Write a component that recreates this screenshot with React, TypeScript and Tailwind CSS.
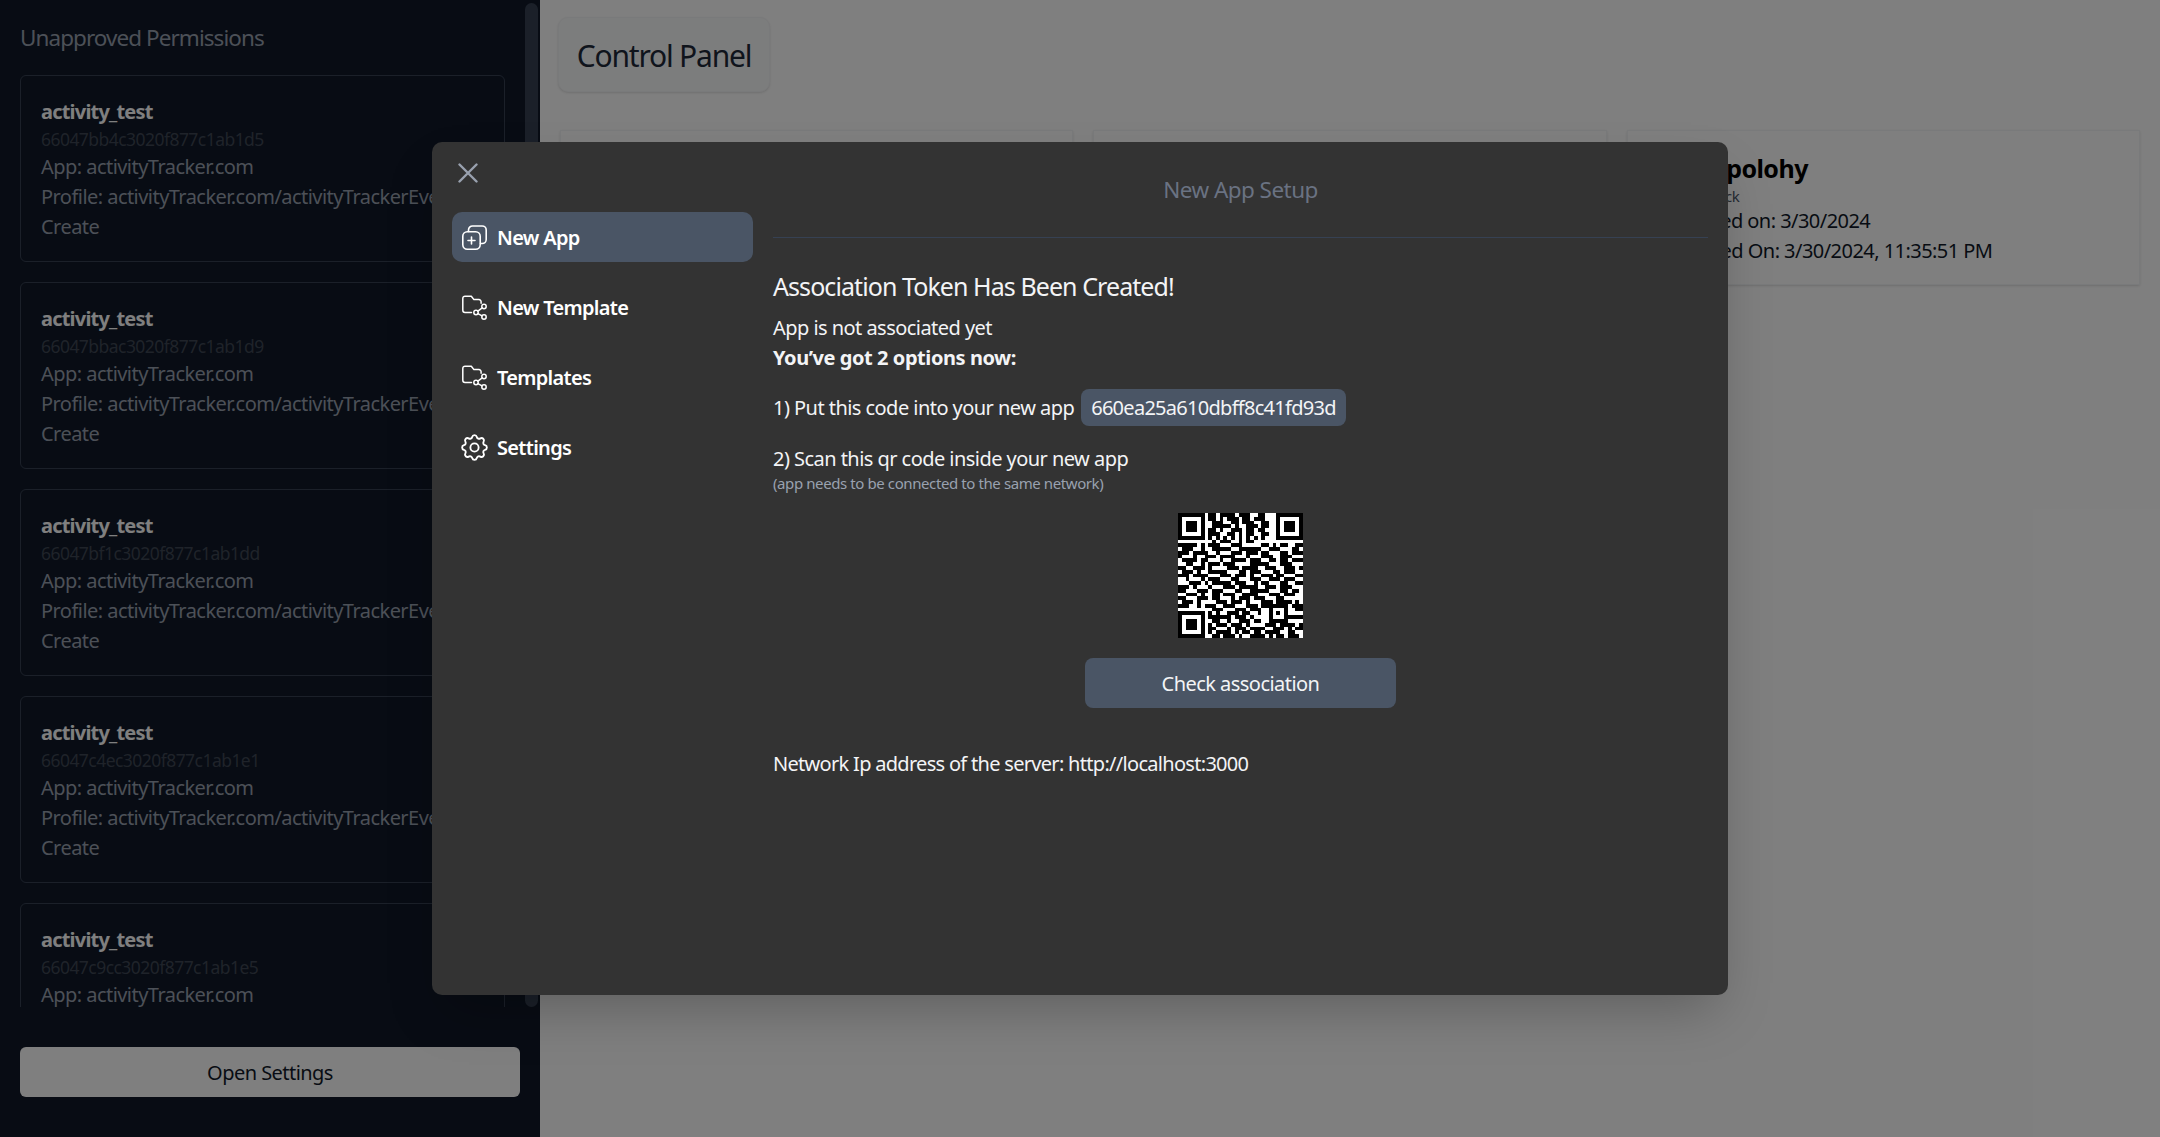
import React from 'react';
import { TbSettings } from 'react-icons/tb';

const permissionIds = [
  '66047bb4c3020f877c1ab1d5',
  '66047bbac3020f877c1ab1d9',
  '66047bf1c3020f877c1ab1dd',
  '66047c4ec3020f877c1ab1e1',
  '66047c9cc3020f877c1ab1e5',
];

const NewAppIcon = () => (
  <svg viewBox="0 0 25 25" className="w-[25px] h-[25px] shrink-0" fill="none" stroke="currentColor" strokeWidth="1.6" strokeLinecap="round" strokeLinejoin="round">
    <rect x="0.8" y="6.8" width="17.4" height="17.4" rx="4.5" />
    <path d="M9.5 12v7M6 15.5h7" />
    <path d="M6.5 6.5V5a4 4 0 0 1 4-4h9.7a4 4 0 0 1 4 4v9.5a4 4 0 0 1-4 4h-1.7" />
  </svg>
);

const FolderShareIcon = () => (
  <svg viewBox="0 0 25 25" className="w-[25px] h-[25px] shrink-0" fill="none" stroke="currentColor" strokeWidth="1.5" strokeLinecap="round" strokeLinejoin="round">
    <path d="M9.5 17.5H3a2.2 2.2 0 0 1-2.2-2.2V3.4A2.2 2.2 0 0 1 3 1.2h6.3l2.6 3.4h5a2.2 2.2 0 0 1 2.2 2.2v1.4" />
    <circle cx="14" cy="17.5" r="2.2" />
    <circle cx="22" cy="11.5" r="2.2" />
    <circle cx="22" cy="22" r="2.2" />
    <path d="M15.9 16.2l4.3-3.3M15.9 18.7l4.2 2.2" />
  </svg>
);

const SettingsIcon = () => <TbSettings className="w-[33px] h-[33px] -m-1 shrink-0" strokeWidth={1.35} />;

const navItems = [
  { label: 'New App', icon: NewAppIcon, active: true },
  { label: 'New Template', icon: FolderShareIcon, active: false },
  { label: 'Templates', icon: FolderShareIcon, active: false },
  { label: 'Settings', icon: SettingsIcon, active: false },
];

// 33 x 33 modules, grouped in 11s; finder and alignment patterns are stamped over it
const qrRows = [
  '........##. ####.###..# #..........',
  '........##. #.###.##.## #..........',
  '.........## #..##.###.. ##.........',
  '.........## ###.#..###. ##.........',
  '........##. #..###.##.# #..........',
  '........### ..##.#.##.. ##.........',
  '........#.# .#.#.#.#.#. #..........',
  '.........#. ###..#.##.. ...........',
  '#####.#.### ...###..... ##.#.##..##',
  '.###..#..## ###..###### ..###...##.',
  '###.####..# ...###.###. ##...##.###',
  '#...#..###. ####...#... ###..###...',
  '.####.##... #..####.### ..##.##.###',
  '..##..#.### .###....### ##...###...',
  '##..###.#.. ..###.####. .###..###.#',
  '.###.#..### ##...##.### ...##.###..',
  '###.####... ###.###.#.. ###.##...##',
  '..#...#.### ...##...### ..###.###..',
  '...###.#.## ###.###..#. ##...##..##',
  '###.#...#.. .###.#####. .###.###...',
  '##...###.## #...##..### ##...##.##.',
  '..###.#..## .###..####. ..###.###..',
  '##...###.## ...#.###.## #...##.....',
  '.###.#....# ##.###.#... ###.####.#.',
  '###..#.###. .###...###. ##...##.###',
  '.........## #...###.### ....###..##',
  '........#.# ..###.##..# ....#.#....',
  '........### ###.###.#.. ....#..####',
  '.........## ..#..###.## ....###....',
  '........#.# ##.###.#... .###.####.#',
  '........##. ..#.###.### #..###.#.##',
  '........#.# ###.#.##.## .####..##..',
  '.........## .###.#..### #.#.##.###.',
].map((row) => row.replace(/ /g, ''));

const QR_SIZE = 33;

const finderAt = (x: number, y: number, ox: number, oy: number) => {
  const dx = x - ox;
  const dy = y - oy;
  if (dx < -1 || dy < -1 || dx > 7 || dy > 7) return null;
  if (dx < 0 || dy < 0 || dx > 6 || dy > 6) return false;
  if (dx === 0 || dy === 0 || dx === 6 || dy === 6) return true;
  return dx >= 2 && dx <= 4 && dy >= 2 && dy <= 4;
};

const isDark = (x: number, y: number) => {
  const finder = finderAt(x, y, 0, 0) ?? finderAt(x, y, 26, 0) ?? finderAt(x, y, 0, 26);
  if (finder !== null) return finder;
  // alignment pattern around module 26,26
  const ax = Math.abs(x - 26);
  const ay = Math.abs(y - 26);
  if (ax <= 2 && ay <= 2) return Math.max(ax, ay) !== 1;
  return qrRows[y]?.[x] === '#';
};

const QrCode = () => {
  let d = '';
  for (let y = 0; y < QR_SIZE; y++) {
    for (let x = 0; x < QR_SIZE; x++) {
      if (isDark(x, y)) d += `M${x} ${y}h1v1h-1z`;
    }
  }
  return (
    <svg viewBox="0 0 33 33" className="w-[125px] h-[125px] block" shapeRendering="crispEdges">
      <rect width="33" height="33" fill="#ffffff" />
      <path d={d} fill="#000000" />
    </svg>
  );
};

const PermissionCard = ({ id }: { id: string }) => (
  <div className="border border-gray-700 rounded-[6px] pt-[21px] pb-[19px] px-5 shrink-0 whitespace-nowrap overflow-hidden">
    <div className="text-[20px] leading-[30px] font-bold text-white tracking-[-0.04em]">activity_test</div>
    <div className="text-[17.5px] leading-[25px] text-[#3f4754]">{id}</div>
    <div className="text-[20px] leading-[30px] text-gray-400">App: activityTracker.com</div>
    <div className="text-[20px] leading-[30px] text-gray-400">Profile: activityTracker.com/activityTrackerEvents</div>
    <div className="text-[20px] leading-[30px] text-gray-400">Create</div>
  </div>
);

const Sidebar = () => (
  <aside className="w-[540px] h-screen shrink-0 bg-gray-900 flex flex-col">
    <div className="flex flex-1 min-h-0 pr-[2px]">
      <div className="flex-1 min-w-0 pl-5 pr-5 overflow-hidden">
        <h2 className="text-[22.5px] leading-[36px] mt-5 mb-[19px] text-gray-400 tracking-[-0.042em]">Unapproved Permissions</h2>
        <div className="flex flex-col gap-5">
          {permissionIds.map((id) => (
            <PermissionCard key={id} id={id} />
          ))}
        </div>
      </div>
      <div className="w-[13px] h-[1004px] mt-[3px] rounded-full bg-gray-700 shrink-0" />
    </div>
    <div className="px-5 pb-10 mt-10">
      <button className="w-full h-[50px] pt-[2px] rounded-[6px] bg-white text-gray-900 text-[20px]">Open Settings</button>
    </div>
  </aside>
);

const DashboardCard = ({ children }: { children?: React.ReactNode }) => (
  <div className="h-[155px] bg-white border border-gray-100 shadow-sm py-5 pl-[38px] whitespace-nowrap overflow-hidden">{children}</div>
);

const Main = () => (
  <main className="flex-1 min-w-0 bg-white">
    <div className="ml-[18px] mt-[17px] w-[212px] h-[75px] pt-[2px] flex items-center justify-center rounded-[10px] border border-gray-100 bg-gray-50 shadow-sm">
      <h1 className="text-[30px] text-gray-800 tracking-[-0.04em]">Control Panel</h1>
    </div>
    <div className="grid grid-cols-3 gap-5 mt-[38px] ml-5 mr-5">
      <DashboardCard />
      <DashboardCard />
      <DashboardCard>
        <div className="text-[25px] leading-[35px] font-bold text-black">New polohy</div>
        <div className="text-[15px] leading-[20px] pl-[7px] text-gray-600">Data track</div>
        <div className="text-[20px] leading-[30px] pl-[7px] text-gray-900">Created on: 3/30/2024</div>
        <div className="text-[20px] leading-[30px] text-gray-900">Updated On: 3/30/2024, 11:35:51 PM</div>
      </DashboardCard>
    </div>
  </main>
);

const NavList = () => (
  <nav className="flex flex-col gap-5 mt-5">
    {navItems.map((item) => {
      const Icon = item.icon;
      return (
        <div
          key={item.label}
          className={`h-[50px] flex items-center gap-[10px] pl-[10px] rounded-[10px] text-white text-[20px] font-semibold tracking-[-0.035em] ${
            item.active ? 'bg-gray-600' : ''
          }`}
        >
          <Icon />
          <span className="pt-[2px]">{item.label}</span>
        </div>
      );
    })}
  </nav>
);

const SetupModal = () => (
  <div className="w-[1296px] h-[853px] mt-[142px] bg-[#333333] rounded-[10px] shadow-2xl p-5 flex gap-5">
    <div className="w-[301px] shrink-0">
      <div className="h-[30px] pl-[6px] pt-[1px] text-gray-400">
        <svg viewBox="0 0 20 20" className="w-5 h-5" fill="none" stroke="currentColor" strokeWidth="2.4" strokeLinecap="round">
          <path d="M1.5 1.5l17 17M18.5 1.5l-17 17" />
        </svg>
      </div>
      <NavList />
    </div>
    <div className="flex-1 min-w-0 text-gray-100">
      <div className="h-[76px] border-b border-gray-700 pt-[10px] text-center text-[22.5px] leading-[35px] text-gray-500">
        New App Setup
      </div>
      <h3 className="text-[25px] leading-[35px] mt-[31px] mb-[9px] tracking-[-0.037em]">Association Token Has Been Created!</h3>
      <p className="text-[20px] leading-[30px]">App is not associated yet</p>
      <p className="text-[20px] leading-[30px] font-bold tracking-[-0.022em]">You&#8217;ve got 2 options now:</p>
      <div className="flex items-center gap-[7px] mt-[16px] text-[20px] leading-[30px]">
        <span>1) Put this code into your new app</span>
        <span className="h-[37px] flex items-center px-[10px] rounded-[8px] bg-gray-600 tracking-[-0.036em]">660ea25a610dbff8c41fd93d</span>
      </div>
      <p className="text-[20px] leading-[30px] mt-[18px]">2) Scan this qr code inside your new app</p>
      <p className="text-[15px] leading-[19px] text-gray-400 tracking-[-0.027em]">(app needs to be connected to the same network)</p>
      <div className="flex flex-col items-center mt-5 gap-5">
        <QrCode />
        <button className="w-[311px] h-[50px] pt-[2px] rounded-[8px] bg-gray-600 text-[20px] text-gray-100">Check association</button>
      </div>
      <p className="text-[20px] leading-[30px] mt-[41px] tracking-[-0.035em]">Network Ip address of the server: http://localhost:3000</p>
    </div>
  </div>
);

const App: React.FC = () => (
  <div className="relative flex h-screen overflow-hidden font-['Noto_Sans',sans-serif] tracking-[-0.034em]">
    <Sidebar />
    <Main />
    <div className="absolute inset-0 bg-black/50 flex justify-center items-start">
      <SetupModal />
    </div>
  </div>
);

export default App;
